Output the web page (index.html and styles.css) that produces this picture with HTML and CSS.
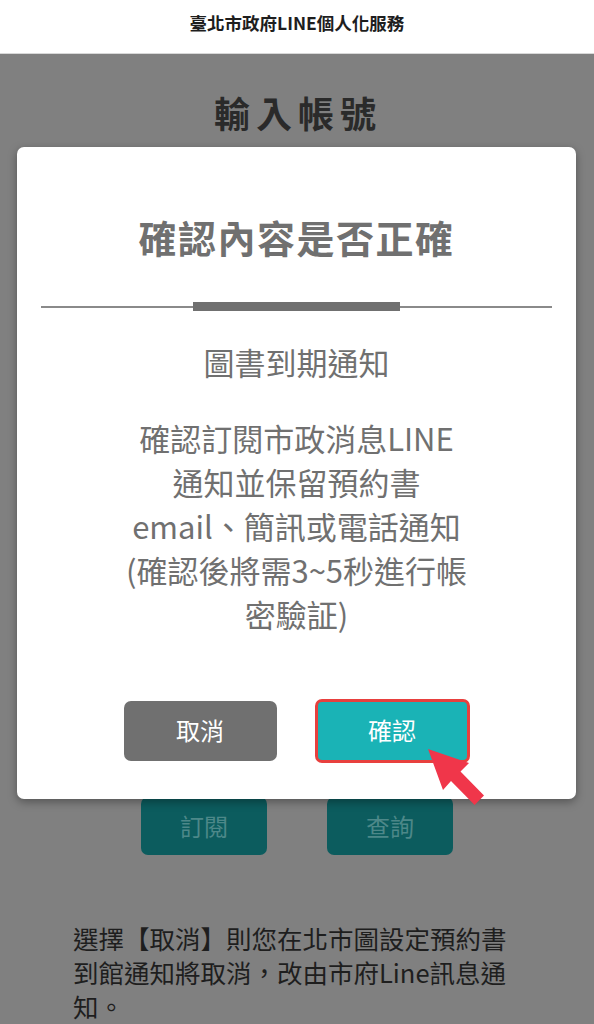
FILE: index.html
```html
<!DOCTYPE html>
<html lang="zh-Hant">
<head>
<meta charset="utf-8">
<title>臺北市政府LINE個人化服務</title>
<link rel="stylesheet" href="styles.css">
</head>
<body>
<header class="topbar">臺北市政府LINE個人化服務</header>
<main class="page">
  <h1 class="page-title">輸入帳號</h1>
  <form class="account-form">
    <label class="field-label">借書證號</label>
    <div class="field-input"></div>
    <label class="field-label">密碼</label>
    <div class="field-input"></div>
  </form>
  <div class="actions">
    <button class="btn-under" type="button">訂閱</button>
    <button class="btn-under" type="button">查詢</button>
  </div>
  <p class="note">選擇【取消】則您在北市圖設定預約書到館通知將取消，改由市府Line訊息通知。</p>
</main>

<div class="modal">
  <h2 class="modal-title">確認內容是否正確</h2>
  <div class="divider"><span class="divider-bar"></span></div>
  <p class="modal-sub">圖書到期通知</p>
  <p class="modal-body">確認訂閱市政消息LINE<br>通知並保留預約書<br>email、簡訊或電話通知<br>(確認後將需3~5秒進行帳<br>密驗証)</p>
  <div class="modal-actions">
    <button class="btn btn-cancel" type="button">取消</button>
    <button class="btn btn-confirm" type="button">確認</button>
  </div>
  <svg class="pointer" width="62" height="62" viewBox="0 0 62 62" aria-hidden="true">
    <polygon points="3,4 44,18 35.5,26.6 59,50.6 49.6,60 26,36 18,45" fill="#f0364a"/>
  </svg>
</div>
</body>
</html>
```

FILE: styles.css
```css
* { box-sizing: border-box; }

html, body {
  margin: 0;
  padding: 0;
}

body {
  font-family: "Noto Sans CJK TC", "Noto Sans", sans-serif;
  background: #808080;
  width: 594px;
  min-height: 1024px;
  overflow: hidden;
}

.topbar {
  height: 54px;
  background: #ffffff;
  border-bottom: 1px solid #d8d8d8;
  display: flex;
  align-items: center;
  justify-content: center;
  padding-bottom: 9px;
  font-size: 17.5px;
  font-weight: 700;
  color: #1e1e1e;
}

.page {
  display: flex;
  flex-direction: column;
  align-items: center;
  padding-top: 37px;
}

.page-title {
  margin: 0;
  font-size: 36px;
  line-height: 43px;
  font-weight: 700;
  color: #2a2a2a;
  letter-spacing: 6px;
  padding-left: 2px;
}

.account-form {
  width: 460px;
  height: 663px;
  display: flex;
  flex-direction: column;
  gap: 14px;
  padding-top: 60px;
}

.field-label {
  font-size: 22px;
  color: #2a2a2a;
}

.field-input {
  height: 48px;
  border: 1px solid #5a5a5a;
  border-radius: 4px;
  background: #808080;
}

.actions {
  display: flex;
  gap: 60px;
}

.btn-under {
  width: 126px;
  height: 58px;
  border: none;
  border-radius: 7px;
  background: #0c5c5e;
  color: #4d8889;
  font-family: inherit;
  font-size: 24px;
  padding: 0 0 2px;
}

.note {
  margin: 66px 0 0 0;
  width: 448px;
  padding-left: 0;
  font-size: 25.5px;
  line-height: 34px;
  color: #1e1e1e;
}

/* dialog over the dimmed page */
.modal {
  position: absolute;
  left: 17px;
  top: 147px;
  width: 559px;
  height: 652px;
  background: #ffffff;
  border-radius: 7px;
  box-shadow: 0 3px 10px rgba(0, 0, 0, 0.35);
  display: flex;
  flex-direction: column;
  align-items: center;
  padding-top: 66px;
}

.modal-title {
  margin: 0;
  font-size: 38px;
  line-height: 47px;
  font-weight: 700;
  color: #707070;
  letter-spacing: 1.5px;
}

.divider {
  align-self: stretch;
  margin: 42px 24px 0;
  height: 9px;
  display: flex;
  align-items: center;
  justify-content: center;
  background: linear-gradient(#8a8a8a, #8a8a8a) center / 100% 2px no-repeat;
}

.divider-bar {
  width: 207px;
  height: 9px;
  background: #707070;
}

.modal-sub {
  margin: 29px 0 0;
  font-size: 31px;
  line-height: 44px;
  color: #707070;
}

.modal-body {
  margin: 32px 0 0;
  font-size: 31px;
  line-height: 44px;
  color: #707070;
  text-align: center;
}

.modal-actions {
  margin-top: 63px;
  display: flex;
  align-items: center;
  gap: 38px;
}

.btn {
  font-family: inherit;
  font-size: 24px;
  color: #ffffff;
  border-radius: 7px;
  display: flex;
  align-items: center;
  justify-content: center;
  padding: 0 0 3px;
}

.btn-cancel {
  width: 153px;
  height: 60px;
  border: none;
  background: #707070;
}

.btn-confirm {
  width: 155px;
  height: 64px;
  border: 3px solid #e8403e;
  background: #1ab3b6;
}

.pointer {
  position: absolute;
  left: 408px;
  top: 598px;
}
```
